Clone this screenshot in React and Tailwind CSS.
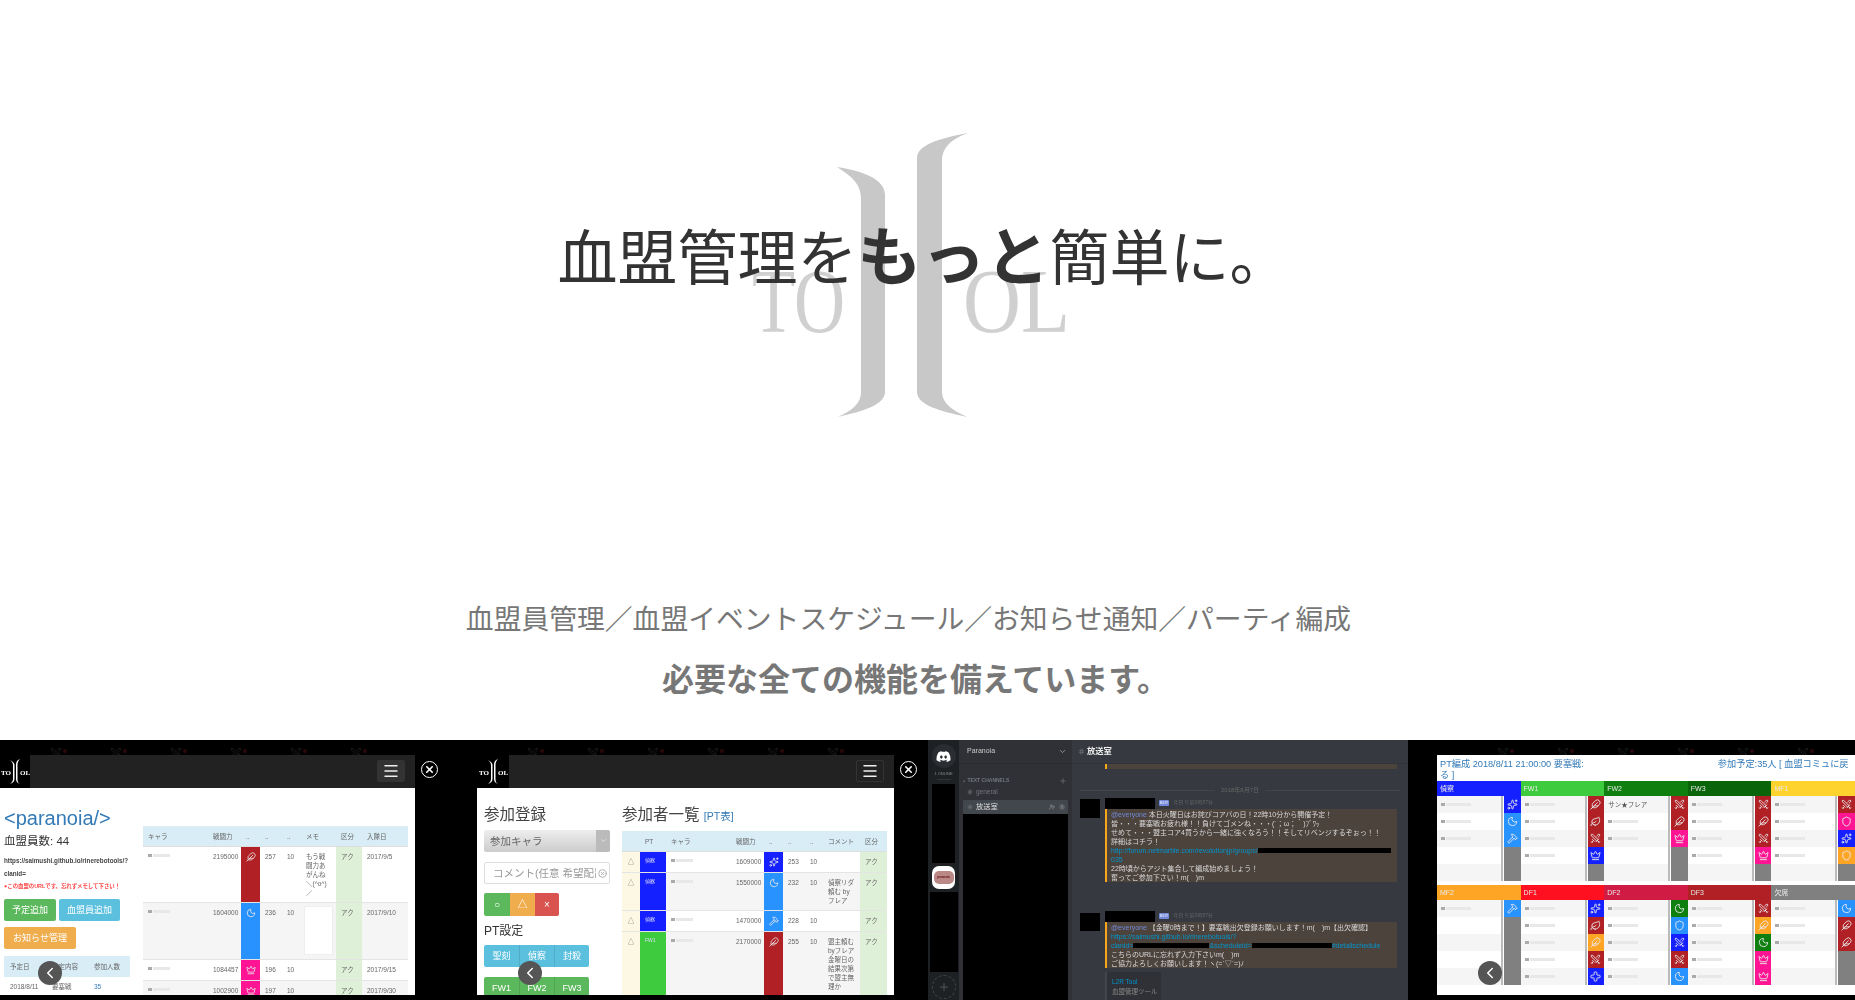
import { ChevronLeft, ChevronDown, Plus, X, Menu, Swords, Moon, Feather, Hammer, Crown, Sparkles, Leaf, Shield, Cross, Settings, UserPlus, Hash, CircleX } from 'lucide-react';

const RED = '#b02025';
const BLUE = '#2892ff';
const NAVY = '#1420ff';
const PINK = '#ff1493';
const ORANGE = '#ffa526';
const GREEN = '#0f8010';

function HeroLogo() {
  return (
    <svg viewBox="0 0 330 285" className="w-[330px] h-[285px] blur-[0.5px]">
      <path fill="#c8c8c8" d="M92 34C118 38 140 46 140 62L140 259C140 272 118 278 93 284C108 277 116 270 116 259L116 66C116 52 108 44 92 34Z" />
      <path fill="#c8c8c8" d="M223 0C207 6 197 14 197 28L197 259C197 270 207 277 222 284C195 278 172 272 172 259L172 25C172 12 195 5 223 0Z" />
      <text x="7" y="199" fontSize="90" fontFamily="Liberation Serif" fill="#d0d0d0" textLength="93" lengthAdjust="spacingAndGlyphs">TO</text>
      <text x="218" y="199" fontSize="90" fontFamily="Liberation Serif" fill="#d0d0d0" textLength="107" lengthAdjust="spacingAndGlyphs">OL</text>
    </svg>
  );
}

function TinyLogo() {
  return (
    <svg viewBox="0 0 30 26" className="w-[30px] h-[26px]">
      <path fill="#fff" d="M10 1C13 3 14.5 4 14.5 6L14.5 20C14.5 22 13 24 10 25C12 23 13 22 13 20L13 6C13 4 12 3 10 1Z" />
      <path fill="#fff" d="M20 0C18 2 17.5 4 17.5 6L17.5 20C17.5 22 18 24 20 25C17 24 16 22 16 20L16 6C16 3 17 1 20 0Z" />
      <text x="1" y="16" fontSize="7" fontWeight="700" fontFamily="Liberation Serif" fill="#fff">TO</text>
      <text x="20" y="16" fontSize="7" fontWeight="700" fontFamily="Liberation Serif" fill="#fff">OL</text>
    </svg>
  );
}

// faint emblem row behind the dark page header of the app screenshots
function BannerStrip({ start }) {
  return (
    <div className="h-[15px] flex overflow-hidden shrink-0" style={{ paddingLeft: start }}>
      {[0, 1, 2, 3, 4, 5].map((i) => (
        <div key={i} className="w-[60px] shrink-0 flex items-start gap-[1px] pt-[7px]">
          <Swords size={12} color="#1c1c1c" />
          <div className="w-[4px] h-[4px] rounded-full bg-[#2a080c] mt-[2px]" />
        </div>
      ))}
    </div>
  );
}

function Noise({ w = 22 }) {
  return (
    <div className="flex gap-[1px] items-center h-[7px]" style={{ width: w }}>
      <div className="h-[3px] w-[4px] bg-[#aaa]" />
      <div className="h-[3px] flex-1 bg-[#e8e8e8]" />
    </div>
  );
}

function IconCell({ color, Icon, size = 10, className = '' }) {
  return (
    <div className={`flex justify-center pt-[5px] ${className}`} style={{ backgroundColor: color }}>
      {Icon && <Icon size={size} color="#e8e8e8" strokeWidth={2} />}
    </div>
  );
}

function WindowHeader({ logoWidth, bordered }) {
  return (
    <div className="h-[33px] flex shrink-0">
      <div className="bg-black flex items-center justify-center shrink-0" style={{ width: logoWidth }}>
        <TinyLogo />
      </div>
      <div className="flex-1 bg-[#222] flex items-start justify-end pr-[10px] pt-[5px]">
        <div className={`w-[28px] h-[22px] rounded-[2px] flex items-center justify-center ${bordered ? 'border border-[#333]' : 'bg-[#333]'}`}>
          <Menu size={18} color="#eee" />
        </div>
      </div>
    </div>
  );
}

function CloseButton() {
  return (
    <div className="flex-1 flex justify-start pl-[6px] pt-[21px]">
      <div className="w-[17px] h-[17px] rounded-full border border-white flex items-center justify-center">
        <X size={11} color="#fff" strokeWidth={3.5} />
      </div>
    </div>
  );
}

function PrevButton({ className }) {
  return (
    <div className={`absolute w-[24px] h-[24px] rounded-full bg-[#555] flex items-center justify-center ${className}`}>
      <ChevronLeft size={18} color="#fff" />
    </div>
  );
}

const memberRows = [
  { h: 'h-[56px]', bg: 'bg-white', color: RED, Icon: Feather, power: '2195000', lv: '257', memo: 'もう戦闘力あがんね＼(^o^)／', date: '2017/9/5' },
  { h: 'h-[57px]', bg: 'bg-[#f5f5f5]', color: BLUE, Icon: Moon, power: '1604000', lv: '236', memoBox: true, date: '2017/9/10' },
  { h: 'h-[21px]', bg: 'bg-white', color: PINK, Icon: Crown, power: '1084457', lv: '196', date: '2017/9/15' },
  { h: 'h-[21px]', bg: 'bg-[#f5f5f5]', color: PINK, Icon: Crown, power: '1002900', lv: '197', date: '2017/9/30' },
];

function MemberTable() {
  const cols = 'grid grid-cols-[65px_33px_19px_22px_19px_35px_26px_46px]';
  return (
    <div className="w-[265px] text-[6.5px] text-[#666] leading-[9px]">
      <div className={`${cols} h-[21px] bg-[#d9edf7] items-center border-b border-[#ddd]`}>
        {['キャラ', '戦闘力', '..', '..', '..', 'メモ', '区分', '入隊日'].map((t, i) => (
          <div key={i} className="px-[5px] whitespace-nowrap">{t}</div>
        ))}
      </div>
      {memberRows.map((r, i) => (
        <div key={i} className={`${cols} ${r.h} ${r.bg} border-b border-[#e4e4e4]`}>
          <div className="p-[5px]"><Noise /></div>
          <div className="p-[5px] whitespace-nowrap">{r.power}</div>
          <IconCell color={r.color} Icon={r.Icon} />
          <div className="p-[5px]">{r.lv}</div>
          <div className="p-[5px]">10</div>
          <div className={r.memoBox ? 'p-[3px]' : 'p-[5px] break-all'}>
            {r.memoBox ? <div className="h-[49px] bg-white border border-[#eee]" /> : r.memo}
          </div>
          <div className="p-[5px] bg-[#dff0d8]">アク</div>
          <div className="p-[5px] whitespace-nowrap">{r.date}</div>
        </div>
      ))}
    </div>
  );
}

function SlideMembers() {
  return (
    <div className="w-[477px] bg-black flex shrink-0 relative overflow-hidden blur-[0.5px]">
      <div className="w-[415px] flex flex-col">
        <BannerStrip start={50} />
        <WindowHeader logoWidth={30} />
        <div className="h-[207px] bg-white flex overflow-hidden">
          <div className="w-[143px] pl-[4px] pr-[4px] shrink-0">
            <div className="text-[20px] leading-[24px] text-[#337ab7] mt-[18px]">&lt;paranoia/&gt;</div>
            <div className="text-[11.5px] leading-[16px] text-[#333] mt-[3px]">血盟員数: 44</div>
            <div className="text-[6.3px] leading-[13px] font-bold text-[#444] mt-[5px] whitespace-nowrap">https://saimushi.github.io/rinerebotools/?</div>
            <div className="text-[6.3px] leading-[13px] font-bold text-[#444]">clanid=</div>
            <div className="text-[5.4px] leading-[13px] font-bold text-[#f44] whitespace-nowrap">●この血盟のURLです。忘れずメモして下さい！</div>
            <div className="flex gap-[3px] mt-[6px]">
              <div className="h-[22px] px-[8px] rounded-[2px] bg-[#5cb85c] text-white text-[9px] leading-[22px] whitespace-nowrap">予定追加</div>
              <div className="h-[22px] px-[8px] rounded-[2px] bg-[#5bc0de] text-white text-[9px] leading-[22px] whitespace-nowrap">血盟員追加</div>
            </div>
            <div className="h-[22px] w-[72px] mt-[6px] rounded-[2px] bg-[#f0ad4e] text-white text-[9px] leading-[22px] text-center whitespace-nowrap">お知らせ管理</div>
            <div className="w-[126px] mt-[7px] text-[6.5px] text-[#666]">
              <div className="h-[21px] bg-[#d9edf7] grid grid-cols-[42px_42px_42px] items-center pl-[6px]">
                <span>予定日</span><span>予定内容</span><span>参加人数</span>
              </div>
              <div className="grid grid-cols-[42px_42px_42px] pl-[6px] pt-[5px] leading-[9px]">
                <span>2018/8/11</span><span>要塞戦</span><span className="text-[#337ab7]">35</span>
              </div>
            </div>
          </div>
          <div className="pt-[38px]"><MemberTable /></div>
        </div>
      </div>
      <CloseButton />
      <PrevButton className="left-[38px] top-[221px]" />
    </div>
  );
}

const joinRows = [
  { h: 'h-[21px]', bg: 'bg-white', pt: '偵察', ptColor: NAVY, color: NAVY, Icon: Sparkles, power: '1609000', lv: '253', comment: '' },
  { h: 'h-[38px]', bg: 'bg-[#f5f5f5]', pt: '偵察', ptColor: NAVY, color: BLUE, Icon: Moon, power: '1550000', lv: '232', comment: '偵察リダ頼む byフレア' },
  { h: 'h-[21px]', bg: 'bg-white', pt: '偵察', ptColor: NAVY, color: BLUE, Icon: Hammer, power: '1470000', lv: '228', comment: '' },
  { h: 'h-[70px]', bg: 'bg-[#f5f5f5]', pt: 'FW1', ptColor: '#3ecc3e', color: RED, Icon: Feather, power: '2170000', lv: '255', comment: '盟主頼む byフレア 金曜日の結果次第で盟主無理か' },
];

function JoinTable() {
  const cols = 'grid grid-cols-[18px_26px_65px_33px_19px_22px_18px_37px_27px]';
  return (
    <div className="w-[265px] text-[6.5px] text-[#666] leading-[9px]">
      <div className={`${cols} h-[21px] bg-[#d9edf7] items-center border-b border-[#ddd]`}>
        {['', 'PT', 'キャラ', '戦闘力', '..', '..', '..', 'コメント', '区分'].map((t, i) => (
          <div key={i} className="px-[5px] whitespace-nowrap">{t}</div>
        ))}
      </div>
      {joinRows.map((r, i) => (
        <div key={i} className={`${cols} ${r.h} ${r.bg} border-b border-[#e4e4e4]`}>
          <div className="bg-[#fcf8e3] pt-[5px] text-center">△</div>
          <div className="text-[5px] text-[#ddf] pl-[5px] pt-[4px]" style={{ backgroundColor: r.ptColor }}>{r.pt}</div>
          <div className="p-[5px]"><Noise /></div>
          <div className="p-[5px] whitespace-nowrap">{r.power}</div>
          <IconCell color={r.color} Icon={r.Icon} />
          <div className="p-[5px]">{r.lv}</div>
          <div className="p-[5px]">10</div>
          <div className="p-[5px] break-all">{r.comment}</div>
          <div className="p-[5px] bg-[#dff0d8]">アク</div>
        </div>
      ))}
    </div>
  );
}

function ButtonGroup({ items, color, className = '' }) {
  return (
    <div className={`flex rounded-[2px] overflow-hidden w-fit text-white text-[9px] ${className}`} style={{ backgroundColor: color }}>
      {items.map((t, i) => (
        <div key={i} className={`w-[35px] text-center ${i ? 'border-l border-black/10' : ''}`}>{t}</div>
      ))}
    </div>
  );
}

function SlideJoin() {
  return (
    <div className="w-[451px] bg-black flex shrink-0 relative overflow-hidden blur-[0.5px]">
      <div className="w-[417px] flex flex-col">
        <BannerStrip start={50} />
        <WindowHeader logoWidth={32} bordered />
        <div className="h-[207px] bg-white flex overflow-hidden">
          <div className="w-[145px] pl-[7px] shrink-0">
            <div className="text-[15.5px] leading-[20px] text-[#444] mt-[17px] whitespace-nowrap">参加登録</div>
            <div className="w-[126px] h-[22px] mt-[5px] rounded-[2px] bg-gradient-to-b from-[#eee] to-[#ccc] text-[10.5px] leading-[22px] text-[#666] pl-[6px] flex justify-between">
              参加キャラ
              <div className="w-[14px] bg-[#bbb] rounded-r-[2px] flex justify-center pt-[7px]">
                <ChevronDown size={7} color="#fff" />
              </div>
            </div>
            <div className="w-[126px] h-[22px] mt-[10px] rounded-[2px] border border-[#ddd] text-[10.5px] leading-[20px] text-[#999] pl-[8px] flex items-center">
              <span className="flex-1 whitespace-nowrap overflow-hidden">コメント(任意 希望配置</span>
              <CircleX size={9} color="#999" className="mx-[2px] shrink-0" />
            </div>
            <div className="flex w-fit mt-[9px] h-[23px] rounded-[2px] overflow-hidden text-white text-[10px] leading-[23px] text-center">
              <div className="w-[26px] bg-[#5cb85c]">○</div>
              <div className="w-[25px] bg-[#f0ad4e]">△</div>
              <div className="w-[24px] bg-[#d9534f]">×</div>
            </div>
            <div className="text-[12px] leading-[16px] text-[#333] mt-[7px]">PT設定</div>
            <ButtonGroup items={['聖刻', '偵察', '封殺']} color="#5bc0de" className="mt-[6px] leading-[22px]" />
            <ButtonGroup items={['FW1', 'FW2', 'FW3']} color="#5cb85c" className="mt-[10px] leading-[22px]" />
          </div>
          <div className="w-[265px]">
            <div className="text-[15.5px] leading-[20px] text-[#444] mt-[17px] whitespace-nowrap">
              参加者一覧 <span className="text-[10.5px] text-[#337ab7]">[PT表]</span>
            </div>
            <div className="mt-[5px]"><JoinTable /></div>
          </div>
        </div>
      </div>
      <CloseButton />
      <PrevButton className="left-[41px] top-[221px]" />
    </div>
  );
}

function EmbedBlock({ children, className = '' }) {
  return (
    <div className={`ml-[33px] mr-[11px] shrink-0 bg-[#4c433c] border-l-[2px] border-[#faa61a] pl-[4px] text-[7px] leading-[9px] text-[#d8d8d8] whitespace-nowrap overflow-hidden ${className}`}>
      {children}
    </div>
  );
}

function MessageHead() {
  return (
    <div className="flex h-[12px] items-center ml-[33px] gap-[2px]">
      <div className="w-[50px] h-[11px] bg-black" />
      <div className="ml-[2px] bg-[#7289da] text-white text-[4px] leading-[6px] px-[1px] rounded-[1px]">BOT</div>
      <div className="text-[5px] text-[#666] ml-[2px]">今日 午前0時57分</div>
    </div>
  );
}

function SlideDiscord() {
  return (
    <div className="w-[480px] bg-[#36393f] flex shrink-0 overflow-hidden blur-[0.5px]">
      <div className="w-[31px] bg-[#1e2124] flex flex-col items-center shrink-0 pt-[4px]">
        <div className="w-[24px] h-[24px] rounded-full bg-[#2a2d32] flex items-center justify-center">
          <svg viewBox="0 0 24 18" className="w-[15px] h-[11px]">
            <path fill="#fff" d="M20 2C18 1 16.500 .5 15 .3L14.500 1.500C13 1.200 11 1.200 9.500 1.500L9 .3C7.500 .5 6 1 4 2C1 6.500 .2 11 .6 15C2.500 16.500 4.500 17.300 6.500 18L7.800 16C7 15.700 6.300 15.300 5.600 14.800L6 14.500C10 16.300 14 16.300 18 14.500L18.400 14.800C17.700 15.300 17 15.700 16.200 16L17.500 18C19.500 17.300 21.500 16.500 23.400 15C23.900 10.500 22.800 6 20 2ZM8.500 12.500C7.300 12.500 6.400 11.400 6.400 10C6.400 8.600 7.300 7.500 8.500 7.500C9.700 7.500 10.600 8.600 10.600 10C10.600 11.400 9.700 12.500 8.500 12.500ZM15.500 12.500C14.300 12.500 13.400 11.400 13.400 10C13.400 8.600 14.300 7.500 15.500 7.500C16.700 7.500 17.600 8.600 17.600 10C17.600 11.400 16.700 12.500 15.500 12.500Z" />
          </svg>
        </div>
        <div className="text-[4px] leading-[5px] text-[#888] mt-[3px] whitespace-nowrap">1 ONLINE</div>
        <div className="w-[14px] h-px bg-[#333] mt-[3px]" />
        <div className="w-[23px] h-[79px] bg-black mt-[4px] shrink-0" />
        <div className="w-[23px] h-[23px] rounded-[7px] bg-white mt-[3px] flex items-center justify-center shrink-0">
          <div className="w-[20px] h-[13px] rounded-[5px] bg-[#b88] flex items-center justify-center text-[3px] font-bold text-[#611]">paranoia</div>
        </div>
        <div className="w-[28px] h-[80px] bg-black mt-[3px] shrink-0" />
        <div className="w-[24px] h-[24px] rounded-full border border-dashed border-[#444] mt-[3px] flex items-center justify-center shrink-0">
          <Plus size={12} color="#555" />
        </div>
      </div>
      <div className="w-[113px] bg-[#2f3136] shrink-0 flex flex-col">
        <div className="h-[24px] flex items-center justify-between pl-[8px] pr-[5px] text-[7px] text-[#ccc] border-b border-[#292b2f] shrink-0">
          Paranoia <ChevronDown size={9} color="#aaa" />
        </div>
        <div className="flex items-center justify-between pl-[3px] pr-[5px] mt-[13px] text-[5px] font-bold text-[#72767d]">
          <span>⌄ TEXT CHANNELS</span><Plus size={8} color="#72767d" />
        </div>
        <div className="flex items-center pl-[8px] h-[12px] mt-[1px] text-[6.5px] text-[#72767d]">
          <Hash size={6} className="mr-[3px]" />general
        </div>
        <div className="mx-[4px] h-[14px] mt-[2px] bg-[#42464d] rounded-[1px] flex items-center pl-[4px] pr-[3px] text-[7.3px] text-[#ddd] shrink-0">
          <Hash size={6} className="mr-[3px]" color="#72767d" />放送室
          <UserPlus size={6} className="ml-auto mr-[4px]" color="#999" /><Settings size={6} color="#999" />
        </div>
        <div className="mx-[4px] flex-1 bg-black" />
      </div>
      <div className="flex-1 min-w-0 flex flex-col">
        <div className="h-[24px] flex items-center pl-[6px] text-[8.3px] font-bold text-[#eee] border-b border-[#30333a] shrink-0">
          <Hash size={7} className="mr-[2px]" color="#72767d" />放送室
        </div>
        <EmbedBlock className="h-[5px]" />
        <div className="flex items-center text-[6px] leading-[8px] text-[#666] mt-[17px] mx-[8px] shrink-0">
          <div className="flex-1 h-px bg-[#42454b]" /><span className="px-[6px]">2018年8月7日</span><div className="flex-1 h-px bg-[#42454b]" />
        </div>
        <div className="relative mt-[3px] shrink-0">
          <div className="absolute left-[8px] top-[2px] w-[20px] h-[19px] bg-black" />
          <MessageHead />
          <EmbedBlock>
            <div className="pt-[1px]"><span className="text-[#7289da]">@everyone</span> 本日火曜日はお詫びコアバの日！22時10分から開催予定！</div>
            <div>皆・・・要塞戦お疲れ様！！負けてゴメンね・・・(´；ω；｀)ﾌﾞﾜｯ</div>
            <div>せめて・・・盟主コア4買うから一緒に強くなろう！！そしてリベンジするぞぉっ！！</div>
            <div>詳細はコチラ！</div>
            <div className="flex items-center"><span className="text-[#0096cf]">http://forum.netmarble.com/revolutionjp/groups/</span><span className="inline-block w-[133px] h-[5px] bg-black" /></div>
            <div className="text-[#0096cf]">035</div>
            <div>22時頃からアジト集合して編成始めましょう！</div>
            <div>奮ってご参加下さい！m(　)m</div>
          </EmbedBlock>
        </div>
        <div className="relative mt-[28px] shrink-0">
          <div className="absolute left-[8px] top-[3px] w-[20px] h-[18px] bg-black" />
          <MessageHead />
          <EmbedBlock>
            <div className="pt-[1px]"><span className="text-[#7289da]">@everyone</span> 【金曜0時まで！】要塞戦出欠登録お願いします！m(　)m【出欠確認】</div>
            <div className="text-[#0096cf]">https://saimushi.github.io/rinerebotools/?</div>
            <div className="flex items-center text-[#0096cf]">clanid=<span className="inline-block w-[76px] h-[5px] bg-black" />&amp;scheduleid=<span className="inline-block w-[80px] h-[5px] bg-black" />#detailschedule</div>
            <div>こちらのURLに忘れず入力下さいm(　)m</div>
            <div>ご協力よろしくお願いします！ヽ(=´▽`=)ﾉ</div>
          </EmbedBlock>
          <div className="ml-[33px] mt-[4px] w-[56px] h-[40px] bg-[#2f3136] border-l-[2px] border-[#42454b] pl-[5px] pt-[5px] text-[6.5px] leading-[9px]">
            <div className="text-[#0096cf]">L2R Tool</div>
            <div className="text-[#888] mt-[1px] whitespace-nowrap">血盟管理ツール</div>
          </div>
        </div>
      </div>
    </div>
  );
}

const ptGroups = [
  [
    { title: '偵察', color: NAVY, rows: [[NAVY, Sparkles], [BLUE, Moon], [BLUE, Hammer]] },
    { title: 'FW1', color: '#3ecc3e', rows: [[RED, Feather], [RED, Leaf], [RED, Swords], [NAVY, Crown]] },
    { title: 'FW2', color: GREEN, rows: [[RED, Swords, 'サン★フレア'], [RED, Feather], [PINK, Crown]] },
    { title: 'FW3', color: '#0a640a', rows: [[RED, Swords], [RED, Feather], [RED, Swords], [PINK, Crown]] },
    { title: 'MF1', color: '#ffd32e', rows: [[RED, Swords], [PINK, Shield], [NAVY, Sparkles], [ORANGE, Shield]] },
  ],
  [
    { title: 'MF2', color: ORANGE, rows: [[BLUE, Hammer]] },
    { title: 'DF1', color: '#ff1020', rows: [[NAVY, Sparkles], [RED, Leaf], [ORANGE, Feather], [RED, Swords], [NAVY, Cross]] },
    { title: 'DF2', color: '#d01c44', rows: [[GREEN, Moon], [BLUE, Shield], [NAVY, Swords], [RED, Swords], [BLUE, Moon]] },
    { title: 'DF3', color: RED, rows: [[RED, Swords], [ORANGE, Feather], [GREEN, Moon], [PINK, Crown], [PINK, Crown]] },
    { title: '欠席', color: '#808080', rows: [[BLUE, Moon], [RED, Feather], [RED, Feather]] },
  ],
];

function PtIcon({ row }) {
  if (!row) return <div className="h-[17px] bg-[#808080]" />;
  const [color, Glyph] = row;
  return (
    <div className="h-[17px] flex items-center justify-center" style={{ backgroundColor: color }}>
      <Glyph size={11} color="#e8e8e8" />
    </div>
  );
}

function PtGroup({ group }) {
  const rows = [0, 1, 2, 3, 4].map((i) => group.rows[i]);
  return (
    <div className="w-[83.6px] shrink-0">
      <div className="h-[15px] text-[7px] leading-[15px] text-[#e8e8e8] pl-[3px]" style={{ backgroundColor: group.color }}>{group.title}</div>
      <div className="grid grid-cols-[64px_3px_1fr]">
        <div>
          {rows.map((r, i) => (
            <div key={i} className={`h-[17px] flex items-center pl-[4px] text-[6.5px] text-[#555] whitespace-nowrap ${i % 2 ? 'bg-white' : 'bg-[#f5f5f5]'}`}>
              {r && (r[2] || <Noise w={30} />)}
            </div>
          ))}
        </div>
        <div className="bg-[#bbb] w-[2px]" />
        <div>
          {rows.map((r, i) => <PtIcon key={i} row={r} />)}
        </div>
      </div>
    </div>
  );
}

function SlideParty() {
  return (
    <div className="w-[447px] bg-black shrink-0 relative overflow-hidden blur-[0.5px]">
      <div className="pl-[29px]"><BannerStrip start={60} /></div>
      <div className="ml-[29px] h-[240px] w-[440px] bg-white">
        <div className="h-[26px] text-[9.2px] leading-[11px] text-[#337ab7] pt-[4px] pl-[3px] whitespace-nowrap">
          PT編成 2018/8/11 21:00:00 要塞戦:<span className="inline-block w-[134px]" />参加予定:35人 [ 血盟コミュに戻<br />る ]
        </div>
        <div className="flex">
          {ptGroups[0].map((g) => <PtGroup key={g.title} group={g} />)}
        </div>
        <div className="flex mt-[4px]">
          {ptGroups[1].map((g) => <PtGroup key={g.title} group={g} />)}
        </div>
      </div>
      <PrevButton className="left-[70px] top-[221px]" />
    </div>
  );
}

export default function App() {
  return (
    <div className="h-[1000px] overflow-hidden bg-white flex flex-col font-['Liberation_Sans','Noto_Sans_CJK_JP',sans-serif]">
      <div className="h-[740px] shrink-0 relative flex flex-col items-center pr-[38px]">
        <div className="absolute left-[745px] top-[133px]">
          <HeroLogo />
        </div>
        <h1 className="relative mt-[222px] pl-[30px] h-[72px] leading-[72px] text-[60px] text-[#333] font-normal whitespace-nowrap">
          血盟管理を<span className="text-[64px] font-bold">もっと</span>簡単に。
        </h1>
        <p className="relative mt-[306px] h-[40px] leading-[40px] text-[27.8px] text-[#777] whitespace-nowrap">
          血盟員管理／血盟イベントスケジュール／お知らせ通知／パーティ編成
        </p>
        <p className="relative mt-[20px] pl-[14px] h-[40px] leading-[40px] text-[32px] font-bold text-[#777] whitespace-nowrap">
          必要な全ての機能を備えています。
        </p>
      </div>
      <div className="h-[260px] shrink-0 flex bg-black">
        <SlideMembers />
        <SlideJoin />
        <SlideDiscord />
        <SlideParty />
      </div>
    </div>
  );
}
